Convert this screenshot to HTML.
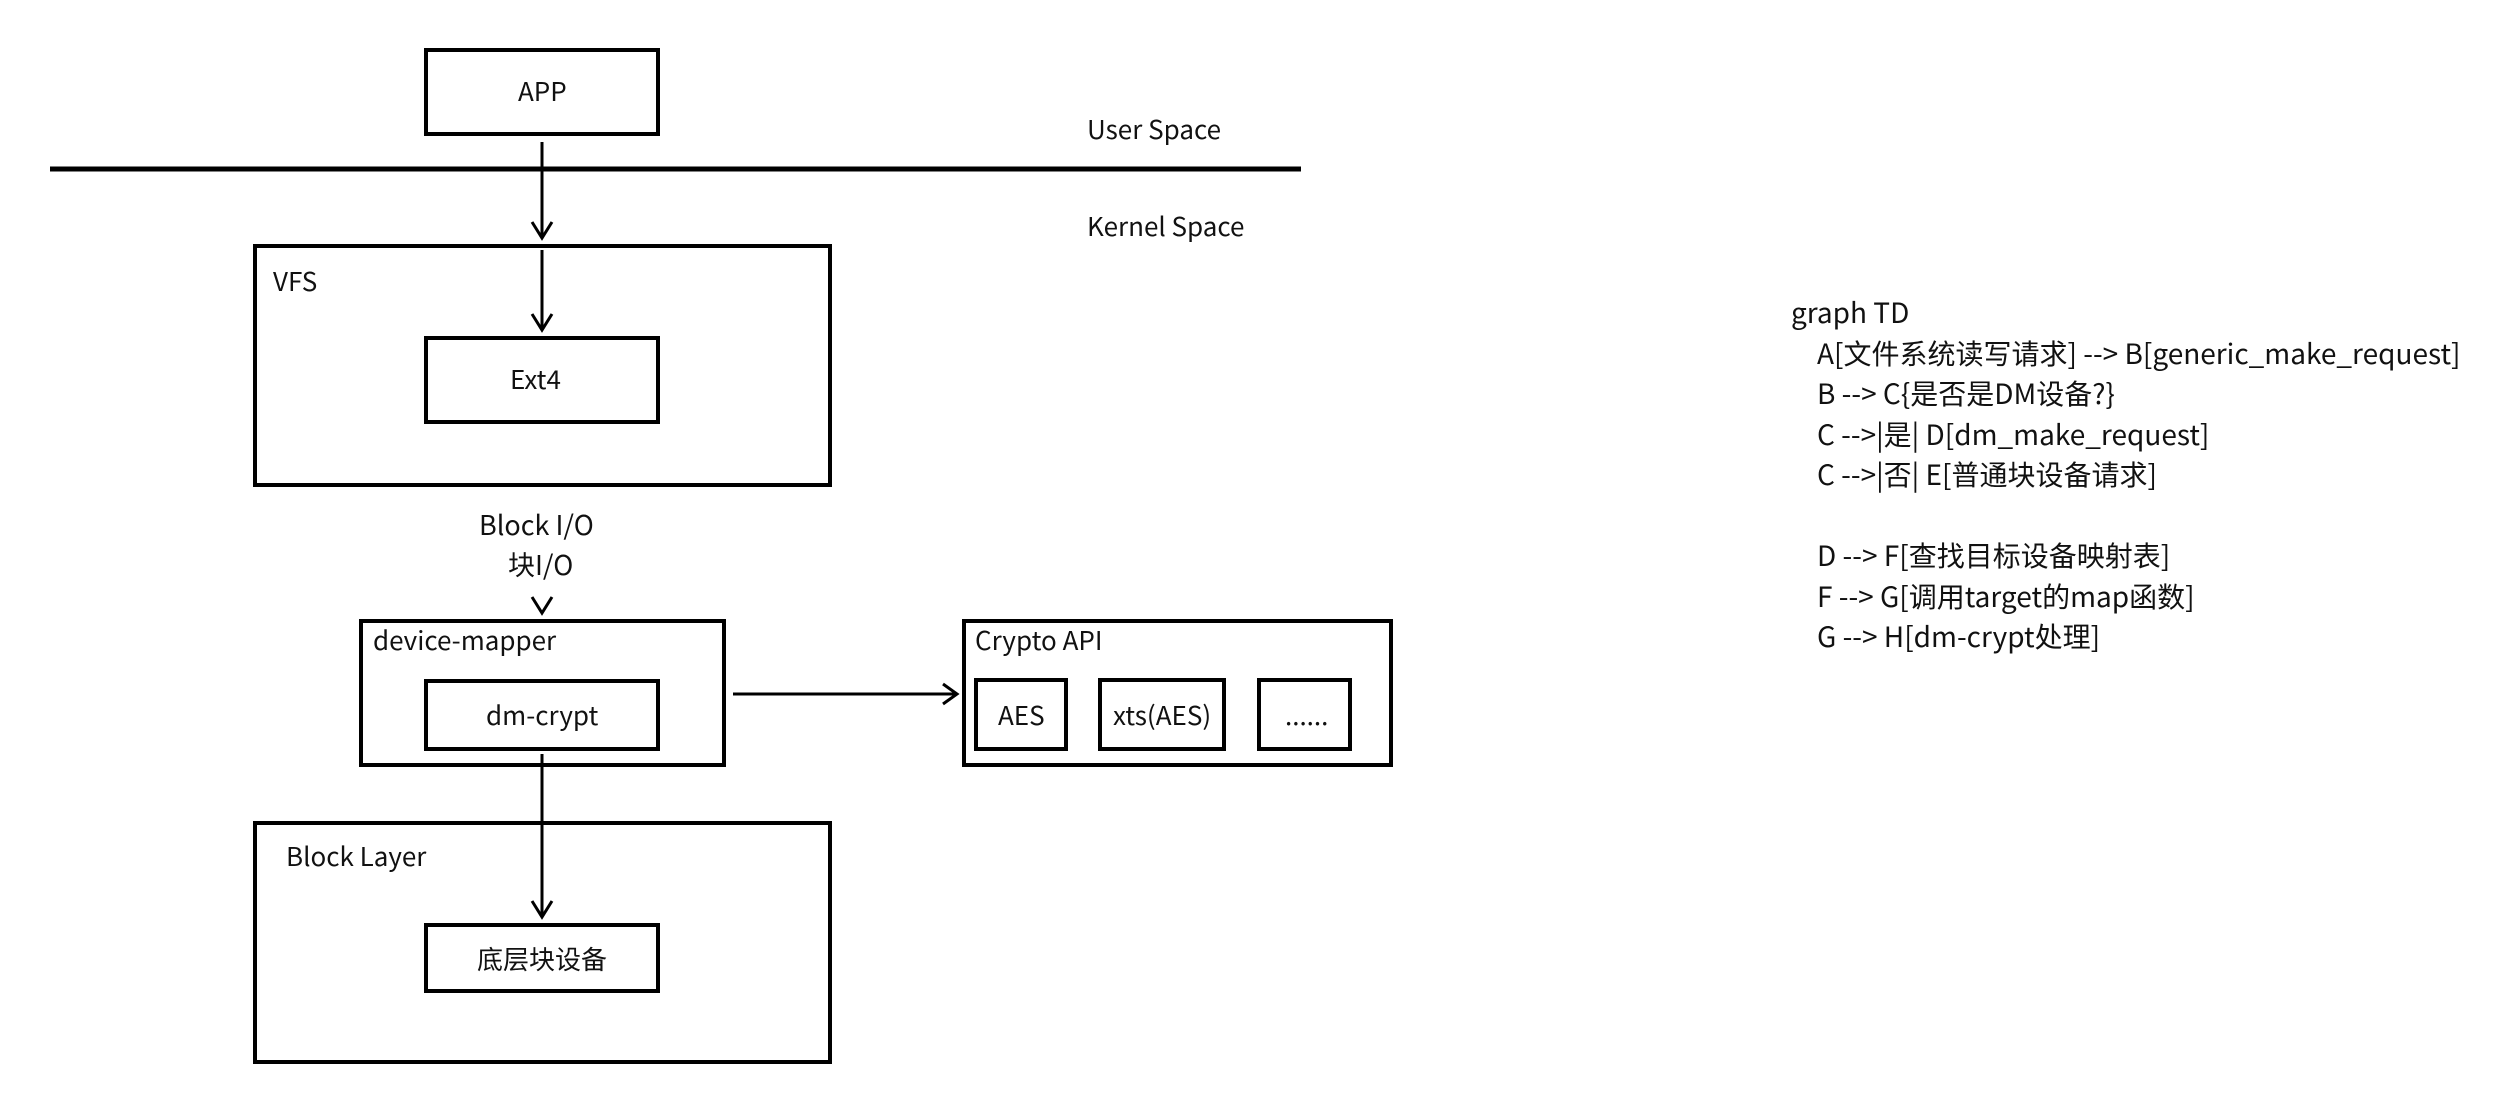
<!DOCTYPE html>
<html><head><meta charset="utf-8"><style>
html,body{margin:0;padding:0;background:#fff;}
body{width:2512px;height:1112px;position:relative;overflow:hidden;font-family:"Noto Sans CJK SC","Liberation Sans",sans-serif;color:#111;}
#d{position:absolute;left:-2px;top:0px;width:2512px;height:1112px;}
.t{position:absolute;font-size:26px;line-height:1;white-space:nowrap;}
.r{position:absolute;font-size:28px;white-space:nowrap;left:1791px;line-height:40.5px;top:292px;}
.r span{padding-left:26px;}
</style></head><body>
<div id="d">
<svg width="2512" height="1112" style="position:absolute;left:0;top:0" fill="none" stroke="#000">
<g stroke-width="4">
<rect x="428" y="50" width="232" height="84"/>
<rect x="257" y="246" width="575" height="239"/>
<rect x="428" y="338" width="232" height="84"/>
<rect x="363" y="621" width="363" height="144"/>
<rect x="428" y="681" width="232" height="68"/>
<rect x="966" y="621" width="427" height="144"/>
<rect x="978" y="680" width="90" height="69"/>
<rect x="1102" y="680" width="124" height="69"/>
<rect x="1261" y="680" width="91" height="69"/>
<rect x="257" y="823" width="575" height="239"/>
<rect x="428" y="925" width="232" height="66"/>
</g>
<line x1="52" y1="169" x2="1303" y2="169" stroke-width="5"/>
<g stroke-width="3">
<line x1="544" y1="142" x2="544" y2="237"/><path d="M534 222 L544 238 L554 222"/>
<line x1="544" y1="250" x2="544" y2="329"/><path d="M534 314 L544 330 L554 314"/>
<path d="M534 597 L544 613 L554 597"/>
<line x1="544" y1="754" x2="544" y2="916"/><path d="M534 901 L544 917 L554 901"/>
<line x1="735" y1="694" x2="958" y2="694"/><path d="M945 684 L959 694 L945 704"/>
</g>
</svg>
<div class="t" style="left:520px;top:78px">APP</div>
<div class="t" style="left:1089px;top:116px">User Space</div>
<div class="t" style="left:1089px;top:213px">Kernel Space</div>
<div class="t" style="left:275px;top:268px">VFS</div>
<div class="t" style="left:512px;top:366px">Ext4</div>
<div class="t" style="left:481px;top:510px;font-size:27px">Block I/O</div>
<div class="t" style="left:510px;top:550px;font-size:27px">块I/O</div>
<div class="t" style="left:375px;top:627px">device-mapper</div>
<div class="t" style="left:488px;top:702px">dm-crypt</div>
<div class="t" style="left:977px;top:627px">Crypto API</div>
<div class="t" style="left:1000px;top:702px">AES</div>
<div class="t" style="left:1115px;top:702px">xts(AES)</div>
<div class="t" style="left:1287px;top:702px">......</div>
<div class="t" style="left:288px;top:843px">Block Layer</div>
<div class="t" style="left:479px;top:946px">底层块设备</div>
</div>
<div class="r">graph TD<br>
<span>A[文件系统读写请求] --&gt; B[generic_make_request]</span><br>
<span>B --&gt; C{是否是DM设备?}</span><br>
<span>C --&gt;|是| D[dm_make_request]</span><br>
<span>C --&gt;|否| E[普通块设备请求]</span><br>
<br>
<span>D --&gt; F[查找目标设备映射表]</span><br>
<span>F --&gt; G[调用target的map函数]</span><br>
<span>G --&gt; H[dm-crypt处理]</span></div>
</body></html>
